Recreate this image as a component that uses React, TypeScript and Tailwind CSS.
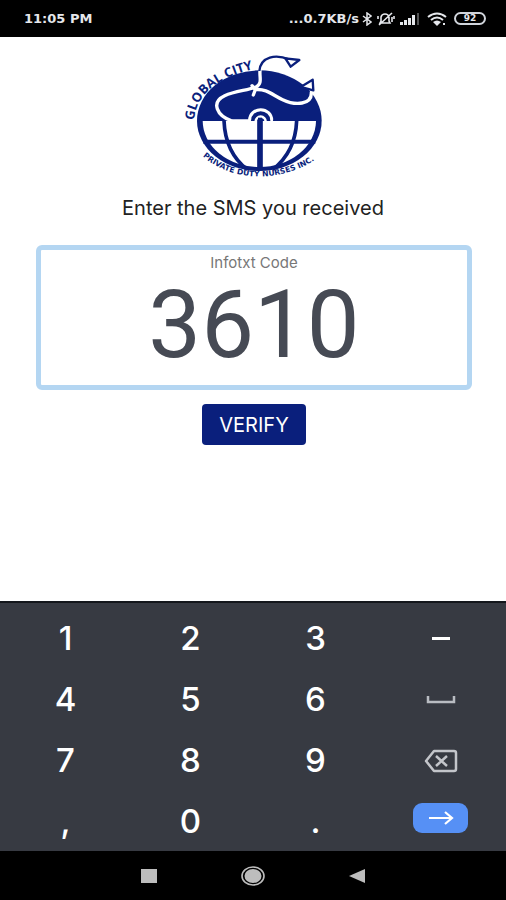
import React, { useState } from 'react';

const NAVY = '#0a1f7c';

const Logo = () => (
  <svg viewBox="-6 0 510 420" className="w-[170px] h-[140px]" role="img" aria-label="Global City Private Duty Nurses Inc.">
    <defs>
      <path id="arcTop" d="M73 226 C75 150 147 84 300 64" />
      <path id="arcBottom" d="M98 334 C190 414 350 420 472 318" />
      <clipPath id="lower"><rect x="60" y="228" width="420" height="190" /></clipPath>
    </defs>

    {/* globe */}
    <ellipse cx="268" cy="227" rx="187" ry="151" fill={NAVY} />
    <g clipPath="url(#lower)">
      <ellipse cx="268" cy="227" rx="170" ry="139" fill="#fff" />
      <g fill="none" stroke={NAVY}>
        <path d="M162 226 C164 290 186 338 232 374 M380 226 C378 290 354 338 308 374" strokeWidth="11" />
        <path d="M100 290 H436" strokeWidth="12" />
        <path d="M270 228 V376" strokeWidth="17" />
      </g>
    </g>

    {/* stethoscope */}
    <g fill="none" stroke="#fff" strokeLinecap="round">
      <path d="M239 225 a33 31 0 0 1 66 0" strokeWidth="9" />
      <path d="M257 230 a15 15 0 0 1 30 0" strokeWidth="8" />
      <path d="M236 228 H186 C140 212 122 172 164 152 C196 138 232 136 258 126 C278 116 268 96 270 78" strokeWidth="10" />
      <path d="M246 122 L256 134 L250 150 M256 134 C290 130 310 152 338 164 C376 182 426 180 424 142" strokeWidth="10" />
    </g>
    <path d="M264 232 v-14 h12 v14 Z" fill={NAVY} />
    <g fill="none" stroke={NAVY} strokeWidth="7" strokeLinejoin="round">
      <path d="M268 78 C272 34 318 26 358 44" />
      <path d="M346 40 L388 45 L362 65 Z" fill="#fff" />
      <path d="M428 104 L392 126 L430 136 Z" fill="#fff" />
    </g>

    <text fill={NAVY} fontFamily="Open Sans, sans-serif" fontSize="39" fontWeight="700">
      <textPath href="#arcTop">GLOBAL CITY</textPath>
    </text>
    <text fill={NAVY} fontFamily="DejaVu Sans, sans-serif" fontSize="23" fontWeight="700">
      <textPath href="#arcBottom">PRIVATE DUTY NURSES INC.</textPath>
    </text>
  </svg>
);

const StatusBar = () => (
  <header className="h-[37px] bg-black text-gray-200 flex items-center justify-between pl-6 pr-5 text-[13px] font-bold font-['DejaVu_Sans',sans-serif]">
    <span>11:05 PM</span>
    <div className="flex items-center gap-[3px]">
      <span>...0.7KB/s</span>
      <svg viewBox="0 0 10 14" className="w-[10px] h-[14px]" fill="none" stroke="currentColor" strokeWidth="1.5">
        <path d="M1 4 L9 10 L5 13 V1 L9 4 L1 10" />
      </svg>
      <svg viewBox="0 0 18 14" className="w-[18px] h-[14px] ml-[2px]" fill="none" stroke="currentColor" strokeWidth="1.6">
        <path d="M3 11 H13 L12 9 V5 C11 1 5 1 4 5 V9 Z M2 13 L15 1 M15 5 V10 M17 4 V7 M1 4 V7" />
      </svg>
      <svg viewBox="0 0 20 12" className="w-[20px] h-[12px] ml-[2px]" fill="currentColor">
        <path d="M0 9h3v3H0zM4 7h3v5H4zM8 5h3v7H8zM12 2h3v10h-3z" />
        <path d="M17 0h2v12h-2z" opacity=".35" />
      </svg>
      <svg viewBox="0 0 20 14" className="w-[20px] h-[14px] ml-1" fill="none" stroke="currentColor" strokeWidth="2">
        <path d="M1 5 Q10 -2 19 5 M4 8 Q10 3 16 8" />
        <path d="M6 10 Q10 7 14 10 L10 14 Z" fill="currentColor" stroke="none" />
        <path d="M16 12h2" />
      </svg>
      <span className="ml-1 w-8 h-[13px] rounded-full border-2 border-gray-300 text-[9px] leading-[9px] text-center">92</span>
    </div>
  </header>
);

const SpaceIcon = () => (
  <svg viewBox="0 0 30 8" className="w-[30px] h-2" fill="none" stroke="#b9bcc2" strokeWidth="2.5">
    <path d="M2 0 V6 H28 V0" />
  </svg>
);

const BackspaceIcon = () => (
  <svg viewBox="0 0 34 24" className="w-[34px] h-6" fill="none" stroke="#c3c5ca" strokeWidth="2.5" strokeLinejoin="round">
    <path d="M10 2 H30 Q32 2 32 4 V20 Q32 22 30 22 H10 L2 12 Z" />
    <path d="M12 7 L23 17 M23 7 L12 17" />
  </svg>
);

const EnterIcon = () => (
  <span className="mb-2 w-[55px] h-[30px] rounded-[9px] bg-[#5690f5] flex items-center justify-center">
    <svg viewBox="0 0 26 14" className="w-[26px] h-[14px]" fill="none" stroke="#fff" strokeWidth="2.2">
      <path d="M1 7 H24 M17 1 L24 7 L17 13" />
    </svg>
  </span>
);

const KEYS = ['1', '2', '3', '-', '4', '5', '6', 'space', '7', '8', '9', 'back', ',', '0', '.', 'enter'];

const keyFace = (k: string) => {
  if (k === '-') return <span className="w-[18px] h-[3px] bg-white" />;
  if (k === 'space') return <SpaceIcon />;
  if (k === 'back') return <BackspaceIcon />;
  if (k === 'enter') return <EnterIcon />;
  return k;
};

const Keypad = ({ onKey }: { onKey: (k: string) => void }) => (
  <div className="bg-[#373a42] border-t-2 border-[#14171c] px-[3px] pt-1 grid grid-cols-4 auto-rows-[61px] text-white text-[33px] leading-none font-medium">
    {KEYS.map(k => (
      <button key={k} type="button" aria-label={k} onClick={() => onKey(k)} className="pt-[2px] flex items-center justify-center">
        {keyFace(k)}
      </button>
    ))}
  </div>
);

const NavBar = () => (
  <nav className="h-[49px] bg-black flex items-center justify-center gap-[84px] text-[#bdbdbd]">
    <button type="button" aria-label="Recents">
      <svg viewBox="0 0 16 14" className="w-4 h-[14px]" fill="currentColor"><path d="M0 0h16v14H0z" /></svg>
    </button>
    <button type="button" aria-label="Home">
      <svg viewBox="0 0 24 20" className="w-6 h-5" fill="none" stroke="currentColor" strokeWidth="1.6">
        <ellipse cx="12" cy="10" rx="11" ry="9" />
        <ellipse cx="12" cy="10" rx="8.5" ry="7" fill="currentColor" stroke="none" />
      </svg>
    </button>
    <button type="button" aria-label="Back">
      <svg viewBox="0 0 16 14" className="w-4 h-[14px]" fill="currentColor"><path d="M16 0v14L0 7z" /></svg>
    </button>
  </nav>
);

const App = () => {
  const [code, setCode] = useState('3610');

  const handleKey = (k: string) => {
    if (k === 'back') setCode(c => c.slice(0, -1));
    else if (/^\d$/.test(k)) setCode(c => (c + k).slice(0, 4));
  };

  return (
    <div className="min-h-screen flex flex-col bg-white font-['Inter',sans-serif]">
      <StatusBar />

      <main className="flex-1 flex flex-col items-center pt-2">
        <Logo />
        <h1 className="mt-2 text-xl leading-[30px] text-[#222]">Enter the SMS you received</h1>

        <form className="w-full pl-9 pr-[34px] mt-[22px] flex flex-col items-center" onSubmit={e => e.preventDefault()}>
          <div className="w-full h-[145px] rounded-md border-[5px] border-[#b4d6f2] flex flex-col items-center">
            <label htmlFor="code" className="mt-[3px] text-[15px] leading-5 text-[#777]">Infotxt Code</label>
            <input
              id="code"
              inputMode="numeric"
              value={code}
              onChange={e => setCode(e.target.value)}
              className="w-full h-[104px] text-center text-[94px] text-[#464a54] outline-none font-['Roboto',sans-serif]"
            />
          </div>
          <button type="submit" className="mt-[14px] w-[104px] h-[41px] rounded bg-[#0a1f7c] text-white text-xl">
            VERIFY
          </button>
        </form>
      </main>

      <Keypad onKey={handleKey} />
      <NavBar />
    </div>
  );
};

export default App;
